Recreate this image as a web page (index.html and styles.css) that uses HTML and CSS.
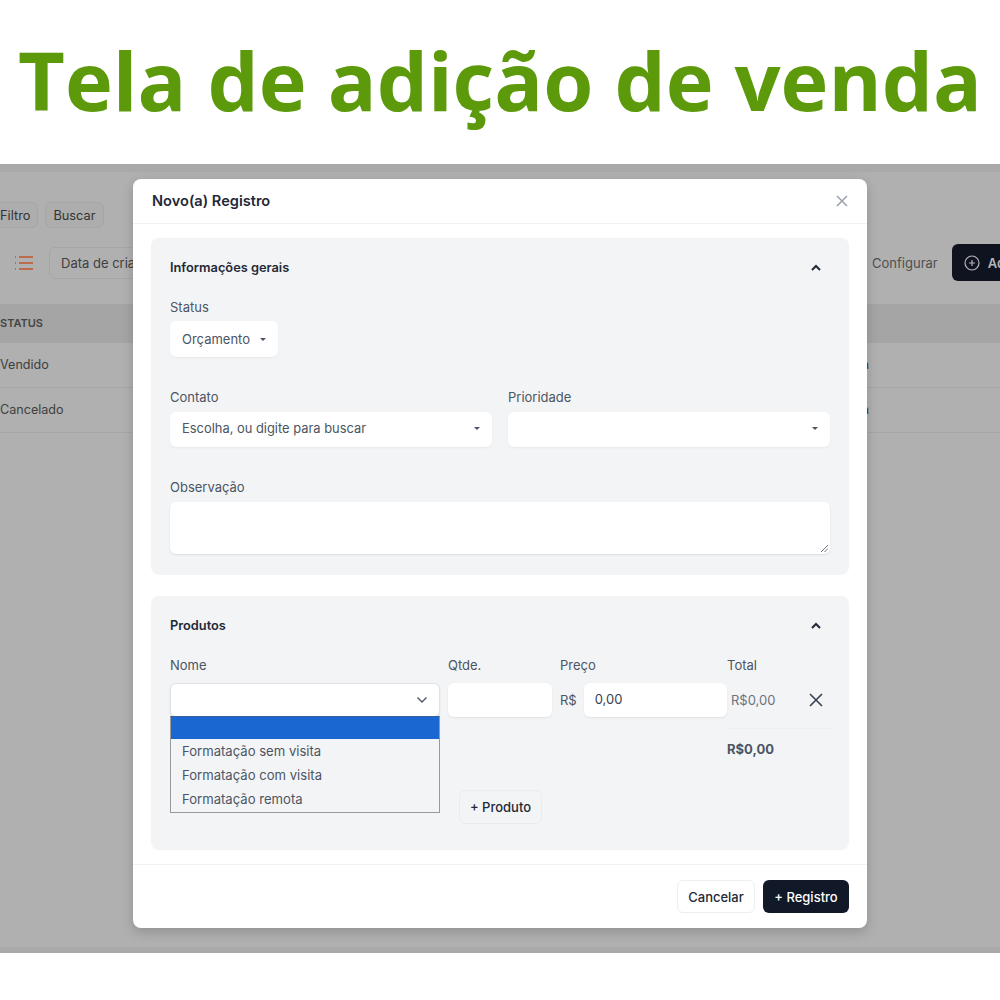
FILE: index.html
```html
<!DOCTYPE html>
<html lang="pt-BR">
<head>
    <meta charset="UTF-8">
    <meta name="viewport" content="width=device-width, initial-scale=1.0">
    <title>Tela de adição de venda</title>
    <link rel="stylesheet" href="styles.css">
</head>
<body>
    <h1 class="banner">Tela de adição de venda</h1>

    <div class="screen">
        <!-- Page behind the modal -->
        <div class="page">
            <div class="filters">
                <button class="ghost-btn filter-first">Filtro</button>
                <button class="ghost-btn">Buscar</button>
            </div>
            <div class="toolbar">
                <div class="toolbar-left">
                    <svg class="list-icon" width="20" height="16" viewBox="0 0 20 16" fill="none" stroke="#c2532c" stroke-width="1.6">
                        <path d="M5 2h14M5 8h14M5 14h14"/>
                        <path d="M1 2h1M1 8h1M1 14h1"/>
                    </svg>
                    <div class="sort-box">Data de criação</div>
                </div>
                <div class="toolbar-right">
                    <span class="config">Configurar</span>
                    <button class="add-btn">
                        <svg width="16" height="16" viewBox="0 0 16 16" fill="none" stroke="#b4b5b8" stroke-width="1.2">
                            <circle cx="8" cy="8" r="7"/>
                            <path d="M8 5v6M5 8h6"/>
                        </svg>
                        Adicionar
                    </button>
                </div>
            </div>
            <div class="table-head">STATUS</div>
            <div class="table-row"><span>Vendido</span><span>Maria</span></div>
            <div class="table-row"><span>Cancelado</span><span>Maria</span></div>
        </div>

        <!-- Modal -->
        <div class="modal">
            <div class="modal-header">
                <h2>Novo(a) Registro</h2>
                <svg width="14" height="14" viewBox="0 0 14 14" fill="none" stroke="#9ca3af" stroke-width="1.6">
                    <path d="M2 2l10 10M12 2L2 12"/>
                </svg>
            </div>

            <div class="modal-body">
                <section class="card card-info">
                    <div class="card-title">
                        <h3>Informações gerais</h3>
                        <svg width="12" height="8" viewBox="0 0 12 8" fill="none" stroke="#1f2937" stroke-width="2">
                            <path d="M2 6l4-4 4 4"/>
                        </svg>
                    </div>

                    <label class="field-label">Status</label>
                    <div class="select select-status">
                        <span>Orçamento</span>
                        <i class="caret"></i>
                    </div>

                    <div class="two-cols">
                        <div>
                            <label class="field-label">Contato</label>
                            <div class="select">
                                <span>Escolha, ou digite para buscar</span>
                                <i class="caret"></i>
                            </div>
                        </div>
                        <div>
                            <label class="field-label">Prioridade</label>
                            <div class="select">
                                <span></span>
                                <i class="caret"></i>
                            </div>
                        </div>
                    </div>

                    <label class="field-label label-obs">Observação</label>
                    <div class="textarea">
                        <svg class="resize" width="7" height="7" viewBox="0 0 7 7" stroke="#6b7280" stroke-width="1">
                            <path d="M0 7l7-7M3.5 7L7 3.5"/>
                        </svg>
                    </div>
                </section>

                <section class="card card-products">
                    <div class="card-title">
                        <h3>Produtos</h3>
                        <svg width="12" height="8" viewBox="0 0 12 8" fill="none" stroke="#1f2937" stroke-width="2">
                            <path d="M2 6l4-4 4 4"/>
                        </svg>
                    </div>

                    <div class="product-grid">
                        <div class="field-label">Nome</div>
                        <div class="field-label">Qtde.</div>
                        <div class="field-label">Preço</div>
                        <div class="field-label">Total</div>

                        <div class="input name-input">
                            <svg width="12" height="8" viewBox="0 0 12 8" fill="none" stroke="#4b5563" stroke-width="1.4">
                                <path d="M1.5 1.5L6 6l4.5-4.5"/>
                            </svg>
                            <ul class="dropdown">
                                <li class="selected"></li>
                                <li>Formatação sem visita</li>
                                <li>Formatação com visita</li>
                                <li>Formatação remota</li>
                            </ul>
                        </div>
                        <div class="input qty-input"></div>
                        <div class="price-cell">
                            <span>R$</span>
                            <div class="input price-input">0,00</div>
                        </div>
                        <div class="total-cell">
                            <span>R$0,00</span>
                            <svg width="16" height="16" viewBox="0 0 16 16" fill="none" stroke="#374151" stroke-width="1.6">
                                <path d="M2 2l12 12M14 2L2 14"/>
                            </svg>
                        </div>
                    </div>

                    <div class="grand-total">R$0,00</div>
                    <button class="add-product">+ Produto</button>
                </section>
            </div>

            <div class="modal-footer">
                <button class="cancel-btn">Cancelar</button>
                <button class="save-btn">+ Registro</button>
            </div>
        </div>
    </div>
</body>
</html>
```

FILE: styles.css
```css
* {
    box-sizing: border-box;
}

body {
    margin: 0;
    height: 1000px;
    overflow: hidden;
    background-color: #fff;
    font-family: Inter, "Liberation Sans", sans-serif;
    font-size: 13px;
    color: #4b5563;
}

button {
    font-family: inherit;
    font-size: 13px;
    cursor: pointer;
}

.banner {
    margin: 0;
    height: 164px;
    line-height: 160px;
    text-align: center;
    white-space: nowrap;
    font-family: "Open Sans", sans-serif;
    font-size: 81px;
    font-weight: 700;
    color: #5c9a0b;
}

/* Greyed page */
.screen {
    position: relative;
    height: 789px;
    overflow: hidden;
    background-color: #b0b0b0;
    border-top: 8px solid #a9a9a9;
    border-bottom: 6px solid #a9a9a9;
}

.page {
    color: #3f3f3f;
}

.filters {
    display: flex;
    gap: 7px;
    padding-top: 30px;
}

.ghost-btn {
    height: 26px;
    padding: 0 7px;
    background-color: #adadad;
    border: 1px solid #a6a6a6;
    border-radius: 6px;
    font-size: 12.8px;
    color: #333;
}

.filter-first {
    margin-left: -9px;
    padding-left: 8px;
}

.toolbar {
    display: flex;
    justify-content: space-between;
    align-items: center;
    height: 37px;
    margin-top: 16px;
}

.toolbar-left {
    display: flex;
    align-items: center;
    gap: 15px;
    padding-left: 14px;
}

.sort-box {
    height: 32px;
    width: 160px;
    padding: 0 11px;
    line-height: 30px;
    border: 1px solid #a6a6a6;
    border-radius: 6px;
    white-space: nowrap;
}

.toolbar-right {
    display: flex;
    align-items: center;
    gap: 14px;
    margin-right: -60px;
}

.config {
    color: #4f4f4f;
}

.add-btn {
    display: flex;
    align-items: center;
    gap: 8px;
    height: 37px;
    padding: 0 12px;
    background-color: #0f1320;
    border: none;
    border-radius: 6px;
    font-weight: 600;
    color: #b4b5b8;
}

.table-head {
    height: 39px;
    margin-top: 23px;
    line-height: 38px;
    background-color: #a5a5a5;
    font-size: 11px;
    font-weight: 600;
    color: #444;
}

.table-row {
    display: flex;
    justify-content: space-between;
    height: 45px;
    padding-right: 131px;
    line-height: 43px;
    border-bottom: 1px solid #a6a6a6;
    font-size: 12.6px;
}

/* Modal */
.modal {
    position: absolute;
    top: 7px;
    left: 133px;
    width: 734px;
    height: 749px;
    display: flex;
    flex-direction: column;
    background-color: #fff;
    border-radius: 8px;
    box-shadow: 0 4px 12px rgba(0, 0, 0, 0.18);
}

.modal-header {
    display: flex;
    justify-content: space-between;
    align-items: center;
    height: 45px;
    padding: 0 18px 0 19px;
    border-bottom: 1px solid #f0f1f3;
}

.modal-header h2 {
    margin: 0;
    font-size: 14.6px;
    font-weight: 600;
    color: #1f2937;
}

.modal-body {
    flex: 1;
    display: flex;
    flex-direction: column;
    gap: 21px;
    padding: 14px 18px 0;
}

.card {
    padding: 0 19px;
    background-color: #f3f4f6;
    border-radius: 8px;
}

.card-info {
    height: 337px;
}

.card-products {
    height: 254px;
}

.card-title {
    display: flex;
    justify-content: space-between;
    align-items: center;
    height: 59px;
    padding-right: 8px;
}

.card-title h3 {
    margin: 0;
    font-size: 12.8px;
    font-weight: 600;
    color: #1f2937;
}

.field-label {
    display: block;
    height: 20px;
    line-height: 20px;
    color: #4b5563;
}

.select {
    display: flex;
    justify-content: space-between;
    align-items: center;
    height: 36px;
    padding: 0 12px;
    background-color: #fff;
    border-radius: 6px;
    box-shadow: 0 1px 2px rgba(0, 0, 0, 0.05);
}

.select-status {
    width: 108px;
    margin-top: 4px;
}

.caret {
    width: 0;
    height: 0;
    border-left: 3.5px solid transparent;
    border-right: 3.5px solid transparent;
    border-top: 3.5px solid #4b5563;
}

.two-cols {
    display: grid;
    grid-template-columns: 322px 322px;
    gap: 16px;
    margin-top: 30px;
}

.two-cols .select {
    height: 35px;
    margin-top: 5px;
    padding-bottom: 2px;
    font-size: 12.9px;
}

.label-obs {
    margin-top: 30px;
}

.textarea {
    position: relative;
    height: 52px;
    margin-top: 5px;
    background-color: #fff;
    border-radius: 6px;
    box-shadow: 0 1px 2px rgba(0, 0, 0, 0.1);
}

.resize {
    position: absolute;
    right: 2px;
    bottom: 2px;
}

.product-grid {
    display: grid;
    grid-template-columns: 278px 112px 167px 104px;
    grid-template-rows: 20px 34px;
    row-gap: 8px;
}

.input {
    height: 34px;
    background-color: #fff;
    border-radius: 6px;
    box-shadow: 0 1px 2px rgba(0, 0, 0, 0.08);
}

.name-input {
    position: relative;
    display: flex;
    justify-content: flex-end;
    align-items: center;
    width: 270px;
    padding-right: 11px;
    border: 1px solid #e0e2e6;
}

.qty-input {
    width: 104px;
}

.price-cell {
    display: flex;
    align-items: center;
    gap: 7px;
}

.price-input {
    width: 143px;
    padding-left: 11px;
    line-height: 32px;
    color: #374151;
}

.total-cell {
    display: flex;
    justify-content: space-between;
    align-items: center;
    padding: 0 7px 0 4px;
    color: #6b7280;
}

.dropdown {
    position: absolute;
    top: 32px;
    left: -1px;
    right: -1px;
    z-index: 10;
    margin: 0;
    padding: 0 0 1px;
    list-style: none;
    background-color: #f3f4f6;
    border: 1px solid #9a9a9a;
    border-top-color: #3a5f9c;
}

.dropdown li {
    height: 24px;
    padding-left: 11px;
    line-height: 24px;
    font-size: 13.1px;
    color: #4b5563;
}

.dropdown li.selected {
    height: 22px;
    background-color: #1a67d2;
}

.grand-total {
    margin: 11px 0 0 557px;
    padding-top: 10px;
    width: 104px;
    border-top: 1px solid #eceef0;
    font-weight: 700;
    color: #4b5563;
    line-height: 20px;
}

.add-product {
    display: block;
    width: 83px;
    height: 34px;
    margin: 31px 0 0 289px;
    padding: 0;
    background-color: #f3f4f6;
    border: 1px solid #eaebee;
    border-radius: 6px;
    color: #1f2937;
    font-weight: 500;
}

.modal-footer {
    display: flex;
    justify-content: flex-end;
    align-items: flex-start;
    gap: 8px;
    height: 64px;
    padding: 15px 18px 0;
    border-top: 1px solid #f0f1f3;
}

.cancel-btn {
    height: 33px;
    width: 78px;
    background-color: #fff;
    border: 1px solid #eceef0;
    border-radius: 6px;
    font-weight: 500;
    color: #1f2937;
}

.save-btn {
    height: 33px;
    width: 86px;
    background-color: #111827;
    border: none;
    border-radius: 6px;
    font-weight: 500;
    color: #fff;
}
```
